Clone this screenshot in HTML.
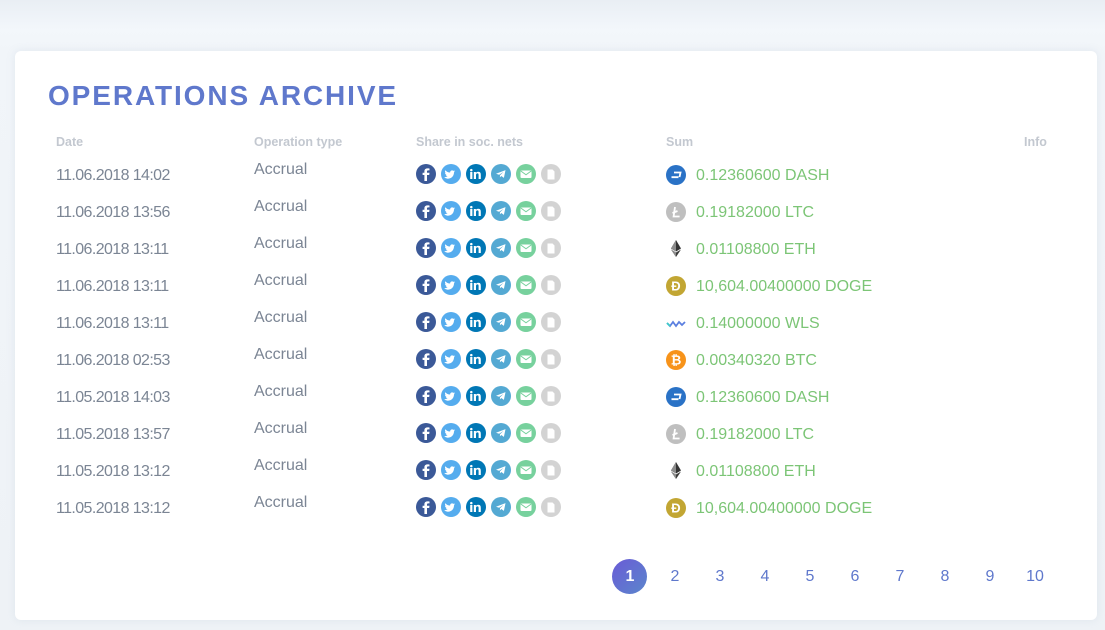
<!DOCTYPE html>
<html><head><meta charset="utf-8"><style>
*{margin:0;padding:0;box-sizing:border-box}
body{width:1105px;height:630px;overflow:hidden;background:linear-gradient(#e9eef4 0,#f3f7fb 30px,#f1f5f9 50px,#eef2f6 630px);font-family:"Liberation Sans",sans-serif;position:relative}
.card{position:absolute;left:15px;top:51px;width:1082px;height:569px;background:#fff;border-radius:6px;box-shadow:0 0 8px rgba(180,195,215,.25)}
h1{position:absolute;left:48px;top:80px;font-size:28px;letter-spacing:1.9px;color:#5f78cc;font-weight:bold}
.th{position:absolute;top:135px;font-size:12.5px;font-weight:bold;color:#c3c8d0}
.row{position:absolute;left:0;width:1105px;height:37px}
.d{position:absolute;left:56px;top:-8px;font-size:16px;color:#7b8594;letter-spacing:-0.6px}
.t{position:absolute;left:254px;top:-14px;font-size:16px;color:#7b8594}
.s{position:absolute;left:416px;top:-11px;height:20px}
.ci{position:absolute;left:666px;top:-10px;width:20px;height:20px}
.v{position:absolute;left:696px;top:-8px;font-size:16px;color:#7cc576}
.pg{position:absolute;top:568px;font-size:16px;color:#5f78cc;width:36px;text-align:center}
</style></head><body>
<div class="card"></div>
<h1>OPERATIONS ARCHIVE</h1>
<div class="th" style="left:56px">Date</div>
<div class="th" style="left:254px">Operation type</div>
<div class="th" style="left:416px">Share in soc. nets</div>
<div class="th" style="left:666px">Sum</div>
<div class="th" style="left:1024px">Info</div>

<svg width="0" height="0" style="position:absolute">
<defs>
<g id="soc">
<circle cx="10" cy="10" r="10" fill="#3b5998"/><path d="M11 17v-6h2.2l.3-2.2H11V7.5c0-.6.2-1.1 1.1-1.1h1.4V4.5c-.3 0-1-.1-2-.1-2 0-3.1 1.1-3.1 3.1v1.3H6.6V11h1.8v6z" fill="#fff"/>
<circle cx="35" cy="10" r="10" fill="#55acee"/><path d="M28.8 13.8c3.8 2.3 9.2 0 9.2-5.4l1.1-1.1-1.2.3.9-1.2-1.3.5c-1.2-1.2-3.5-.5-3.4 1.6-2.2 0-3.7-1.1-4.8-2.3-.7 1.2 0 2.5.6 2.8l-.9-.2c0 1.1.9 1.8 1.6 2h-.9c.3.9 1.1 1.3 1.9 1.3-.9.7-2 1.1-3.2 1z" fill="#fff"/>
<circle cx="60" cy="10" r="10" fill="#0077b5"/><path d="M54.2 8h2.2v7h-2.2zM55.3 4.9a1.25 1.25 0 1 1 0 2.5 1.25 1.25 0 0 1 0-2.5zM57.8 8h2.1v1c.3-.6 1.1-1.2 2.3-1.2 2.2 0 2.6 1.4 2.6 3.3V15h-2.2v-3.6c0-.9 0-2-1.2-2s-1.4.9-1.4 1.9V15h-2.2z" fill="#fff"/>
<circle cx="85" cy="10" r="10" fill="#54a9d3"/><path d="M80 9.8l9.5-3.7-1.6 7.8-2.6-1.9-1.4 1.4.1-2.2 3.6-3.3-4.5 2.8z" fill="#fff"/>
<circle cx="110" cy="10" r="10" fill="#77d19d"/><rect x="104.5" y="6.5" width="11" height="7.5" rx="1" fill="#fff"/><path d="M104.8 7l5.2 3.8 5.2-3.8" stroke="#77d19d" stroke-width="1" fill="none"/>
<circle cx="135" cy="10" r="10" fill="#d3d3d3"/><path d="M131.5 5.5h5l2 2v8h-7z" fill="#fff"/>
</g>
<g id="dash"><circle cx="10" cy="10" r="10" fill="#2a72c6"/><path d="M5.5 12.2h7M8 7.5h6.5l-1 4.6" stroke="#fff" stroke-width="1.8" fill="none"/></g>
<g id="ltc"><circle cx="10" cy="10" r="10" fill="#bfbfbf"/><path d="M9 5l-1.4 9.5h6M6.5 11l5-2" stroke="#fff" stroke-width="1.8" fill="none"/></g>
<g id="eth"><path d="M10 1l5 8.5-5 3-5-3z" fill="#343434"/><path d="M10 1v11.5l-5-3z" fill="#8c8c8c"/><path d="M10 13.5l5-3-5 7.5-5-7.5z" fill="#3c3c3b"/><path d="M10 13.5v4.5l-5-7.5z" fill="#8c8c8c"/></g>
<g id="doge"><circle cx="10" cy="10" r="10" fill="#c2a633"/><text x="10" y="14.5" font-size="13" font-weight="bold" fill="#fff" text-anchor="middle" font-family="Liberation Sans">Đ</text></g>
<g id="wls"><path d="M1 10l3 3 3-4 3 4 3-4 3 3 3-3" stroke="#5b7fe0" stroke-width="1.8" fill="none"/><path d="M1 10l3 3" stroke="#3ecbc9" stroke-width="1.8"/></g>
<g id="btc"><circle cx="10" cy="10" r="10" fill="#f7931a"/><text x="10" y="14.5" font-size="13" font-weight="bold" fill="#fff" text-anchor="middle" font-family="Liberation Sans">₿</text></g>
</defs></svg>

<div class="row" style="top:175px"><div class="d">11.06.2018 14:02</div><div class="t">Accrual</div><svg class="s" width="146" height="20"><use href="#soc"/></svg><svg class="ci" width="20" height="20"><use href="#dash"/></svg><div class="v">0.12360600 DASH</div></div>
<div class="row" style="top:212px"><div class="d">11.06.2018 13:56</div><div class="t">Accrual</div><svg class="s" width="146" height="20"><use href="#soc"/></svg><svg class="ci" width="20" height="20"><use href="#ltc"/></svg><div class="v">0.19182000 LTC</div></div>
<div class="row" style="top:249px"><div class="d">11.06.2018 13:11</div><div class="t">Accrual</div><svg class="s" width="146" height="20"><use href="#soc"/></svg><svg class="ci" width="20" height="20"><use href="#eth"/></svg><div class="v">0.01108800 ETH</div></div>
<div class="row" style="top:286px"><div class="d">11.06.2018 13:11</div><div class="t">Accrual</div><svg class="s" width="146" height="20"><use href="#soc"/></svg><svg class="ci" width="20" height="20"><use href="#doge"/></svg><div class="v">10,604.00400000 DOGE</div></div>
<div class="row" style="top:323px"><div class="d">11.06.2018 13:11</div><div class="t">Accrual</div><svg class="s" width="146" height="20"><use href="#soc"/></svg><svg class="ci" width="20" height="20"><use href="#wls"/></svg><div class="v">0.14000000 WLS</div></div>
<div class="row" style="top:360px"><div class="d">11.06.2018 02:53</div><div class="t">Accrual</div><svg class="s" width="146" height="20"><use href="#soc"/></svg><svg class="ci" width="20" height="20"><use href="#btc"/></svg><div class="v">0.00340320 BTC</div></div>
<div class="row" style="top:397px"><div class="d">11.05.2018 14:03</div><div class="t">Accrual</div><svg class="s" width="146" height="20"><use href="#soc"/></svg><svg class="ci" width="20" height="20"><use href="#dash"/></svg><div class="v">0.12360600 DASH</div></div>
<div class="row" style="top:434px"><div class="d">11.05.2018 13:57</div><div class="t">Accrual</div><svg class="s" width="146" height="20"><use href="#soc"/></svg><svg class="ci" width="20" height="20"><use href="#ltc"/></svg><div class="v">0.19182000 LTC</div></div>
<div class="row" style="top:471px"><div class="d">11.05.2018 13:12</div><div class="t">Accrual</div><svg class="s" width="146" height="20"><use href="#soc"/></svg><svg class="ci" width="20" height="20"><use href="#eth"/></svg><div class="v">0.01108800 ETH</div></div>
<div class="row" style="top:508px"><div class="d">11.05.2018 13:12</div><div class="t">Accrual</div><svg class="s" width="146" height="20"><use href="#soc"/></svg><svg class="ci" width="20" height="20"><use href="#doge"/></svg><div class="v">10,604.00400000 DOGE</div></div>

<div style="position:absolute;left:612px;top:559px;width:35px;height:35px;border-radius:50%;background:linear-gradient(135deg,#6a5bd6,#5b86cc)"></div>
<div class="pg" style="left:612px;top:568px;color:#fff;font-weight:bold">1</div>
<div class="pg" style="left:657px">2</div>
<div class="pg" style="left:702px">3</div>
<div class="pg" style="left:747px">4</div>
<div class="pg" style="left:792px">5</div>
<div class="pg" style="left:837px">6</div>
<div class="pg" style="left:882px">7</div>
<div class="pg" style="left:927px">8</div>
<div class="pg" style="left:972px">9</div>
<div class="pg" style="left:1017px">10</div>
</body></html>
